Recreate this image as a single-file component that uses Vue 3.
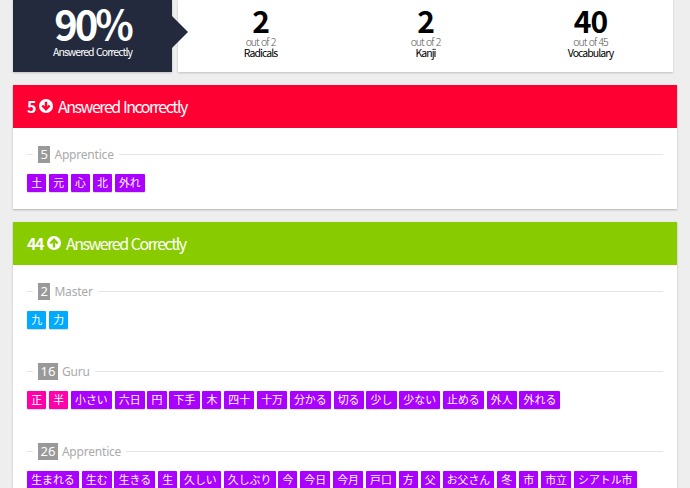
<template>
  <div class="page">
    <div class="summary">
      <div class="score">
        <div class="score-value">90%</div>
        <div class="score-label">Answered Correctly</div>
      </div>
      <div class="totals">
        <div v-for="t in totals" :key="t.name" class="total">
          <div class="total-count">{{ t.count }}</div>
          <div class="total-out">out of {{ t.max }}</div>
          <div class="total-name">{{ t.name }}</div>
        </div>
      </div>
    </div>

    <section v-for="p in panels" :key="p.title" class="panel">
      <h2 class="panel-head" :class="p.kind">
        <span class="panel-count">{{ p.count }}</span>
        <svg class="panel-icon" viewBox="0 0 16 16">
          <circle cx="8" cy="8" r="8" fill="#fff" />
          <path :d="p.kind === 'bad' ? 'M8 3v8.4M3.8 7.4 8 11.8l4.2-4.4' : 'M8 13V4.6M3.8 8.6 8 4.2l4.2 4.4'" fill="none" :stroke="p.kind === 'bad' ? '#f03' : '#8c0'" stroke-width="2.8" />
        </svg>
        <span class="panel-title">{{ p.title }}</span>
      </h2>
      <div class="panel-body">
        <div v-for="g in p.groups" :key="g.name" class="group">
          <div class="group-head">
            <span class="group-count">{{ g.items.length + g.extra }}</span>
            <span class="group-name">{{ g.name }}</span>
          </div>
          <ul class="chips">
            <li v-for="(c, i) in g.items" :key="i" class="chip" :class="c.type">{{ c.text }}</li>
          </ul>
        </div>
      </div>
    </section>
  </div>
</template>

<script setup>
const totals = [
  { count: 2, max: 2, name: 'Radicals' },
  { count: 2, max: 2, name: 'Kanji' },
  { count: 40, max: 45, name: 'Vocabulary' }
]

const chips = (type, list) => list.split(' ').map((text) => ({ text, type }))

const panels = [
  {
    kind: 'bad',
    count: 5,
    title: 'Answered Incorrectly',
    groups: [
      { name: 'Apprentice', extra: 0, items: chips('vocab', '土 元 心 北 外れ') }
    ]
  },
  {
    kind: 'good',
    count: 44,
    title: 'Answered Correctly',
    groups: [
      { name: 'Master', extra: 0, items: chips('radical', '九 力') },
      {
        name: 'Guru',
        extra: 0,
        items: [
          ...chips('kanji', '正 半'),
          ...chips('vocab', '小さい 六日 円 下手 木 四十 十万 分かる 切る 少し 少ない 止める 外人 外れる')
        ]
      },
      {
        name: 'Apprentice',
        extra: 9,
        items: chips('vocab', '生まれる 生む 生きる 生 久しい 久しぶり 今 今日 今月 戸口 方 父 お父さん 冬 市 市立 シアトル市')
      }
    ]
  }
]
</script>

<style>
html,
body {
  margin: 0;
  background: #eee;
  overflow: hidden;
}
</style>

<style scoped>
.page {
  height: 488px;
  overflow: hidden;
  padding: 0 13px;
  box-sizing: border-box;
  font-family: "Noto Sans CJK JP", sans-serif;
}

.summary {
  display: flex;
  height: 72px;
  gap: 6px;
  margin-right: 4px;
  margin-bottom: 13px;
}

.score {
  position: relative;
  width: 159px;
  flex-shrink: 0;
  background: #232a3d;
  color: #fff;
  text-align: center;
  box-shadow: 0 1px 2px rgba(0, 0, 0, 0.2);
}

.score::after {
  content: "";
  position: absolute;
  left: 100%;
  top: 16px;
  border-left: 16px solid #232a3d;
  border-top: 16px solid transparent;
  border-bottom: 16px solid transparent;
}

.score-value {
  font-size: 40px;
  font-weight: 700;
  letter-spacing: -3px;
  line-height: 43px;
  margin-top: 2px;
}

.score-label {
  font-size: 10.5px;
  letter-spacing: -0.95px;
  word-spacing: 1px;
  line-height: 14px;
}

.totals {
  flex: 1;
  display: flex;
  background: #fff;
  box-shadow: 0 1px 2px rgba(0, 0, 0, 0.2);
}

.total {
  flex: 1;
  text-align: center;
  padding-top: 4px;
}

.total-count {
  font-size: 30px;
  font-weight: 700;
  letter-spacing: -1px;
  line-height: 32px;
  color: #000;
}

.total-out {
  font-size: 10.5px;
  font-weight: 300;
  letter-spacing: -1px;
  word-spacing: 1px;
  line-height: 11px;
  color: #555;
}

.total-name {
  font-size: 10.5px;
  letter-spacing: -0.95px;
  line-height: 11px;
  color: #000;
}

.panel {
  background: #fff;
  margin-bottom: 13px;
  box-shadow: 0 1px 2px rgba(0, 0, 0, 0.25);
}

.panel-head {
  display: flex;
  align-items: center;
  height: 43px;
  box-sizing: border-box;
  margin: 0;
  padding: 0 0 2px 14px;
  color: #fff;
  font-size: 16px;
  font-weight: 400;
}

.panel-head.bad {
  background: #f03;
}

.panel-head.good {
  background: #8c0;
}

.panel-count {
  font-weight: 700;
  letter-spacing: -1.5px;
}

.panel-icon {
  width: 14px;
  height: 14px;
  margin: 0 5px 0 4px;
}

.panel-title {
  letter-spacing: -1.45px;
  word-spacing: 1px;
}

.panel-body {
  padding: 17px 14px;
}

.group + .group {
  margin-top: 33px;
}

.group-head {
  display: flex;
  align-items: center;
  height: 18px;
  color: #aaa;
  font-family: "Noto Sans", sans-serif;
  font-size: 12px;
}

.group-head::before {
  content: "";
  width: 6px;
  height: 1px;
  margin-right: 5px;
  background: #e5e5e5;
}

.group-head::after {
  content: "";
  flex: 1;
  height: 1px;
  background: #e5e5e5;
  margin-left: 5px;
}

.group-count {
  background: #999;
  color: #fff;
  padding: 0 2.5px;
  font-size: 13px;
  line-height: 17px;
  margin-right: 4px;
  text-align: center;
}

.group-name {
  letter-spacing: -0.2px;
}

.chips {
  display: flex;
  flex-wrap: wrap;
  gap: 2.67px;
  list-style: none;
  margin: 11px 0 0;
  padding: 0;
}

.chip {
  height: 18px;
  line-height: 17px;
  padding: 0 4.2px;
  color: #fff;
  font-size: 10.9px;
  border-radius: 1px;
  box-shadow: 0 1px 1px rgba(0, 0, 0, 0.15);
}

.chip.vocab {
  background: #a0f;
}

.chip.kanji {
  background: #f0a;
}

.chip.radical {
  background: #0af;
}
</style>
